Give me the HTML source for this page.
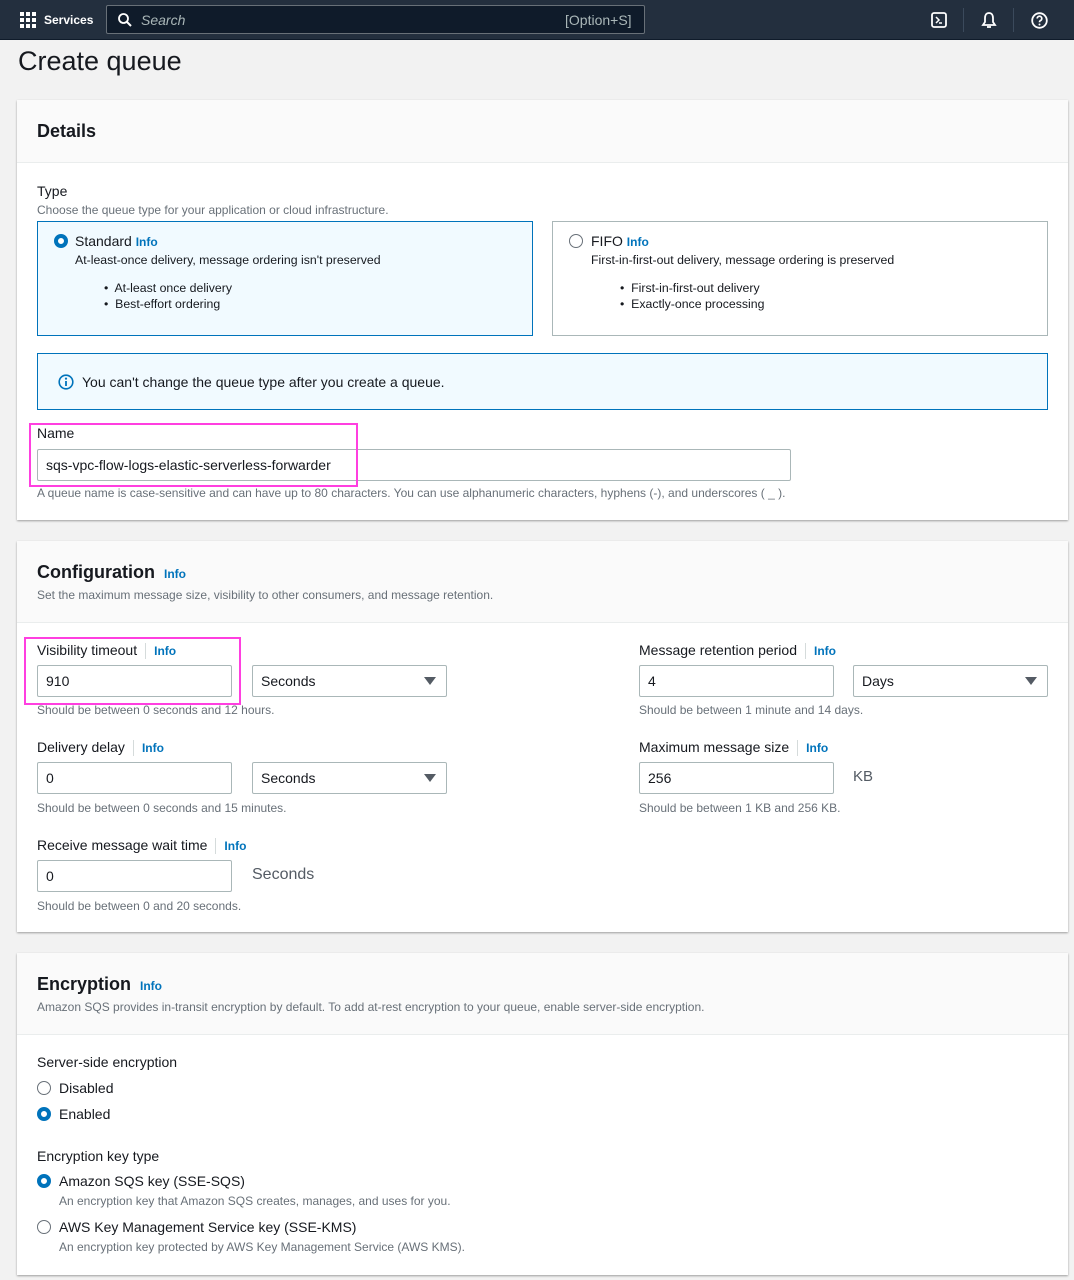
<!DOCTYPE html>
<html><head><meta charset="utf-8"><style>
*{box-sizing:border-box;margin:0;padding:0}
body{width:1074px;height:1280px;background:#f2f2f2;font-family:"Liberation Sans",sans-serif;color:#16191f;position:relative;overflow:hidden}
.a{position:absolute;white-space:nowrap}
.top{position:absolute;left:0;top:0;width:1074px;height:40px;background:#232f3e;border-bottom:1px solid #0f1b2a}
.panel{position:absolute;left:17px;width:1051px;background:#fff;box-shadow:0 1px 2px rgba(0,0,0,.35)}
.ph{position:absolute;left:0;top:0;width:100%;background:#fafafa;border-bottom:1px solid #eaeded}
.h2{font-size:18px;font-weight:bold}
.info{color:#0073bb;font-size:12px;font-weight:bold}
.lbl{font-size:14px}
.hint{font-size:12px;color:#687078}
.sm{font-size:12.3px}
.inp{position:absolute;height:32px;border:1px solid #aab7b8;background:#fff;font-size:14px;padding:7px 8px;border-radius:2px}
.sel:after{content:"";position:absolute;right:10px;top:11px;border-left:6px solid transparent;border-right:6px solid transparent;border-top:8px solid #545b64}
.r{position:absolute;width:14px;height:14px;border-radius:50%;border:1.5px solid #687078;background:#fff}
.r.on{border:4px solid #0073bb}
.pink{position:absolute;border:2px solid #ff3fe0}
.sep{display:inline-block;width:1px;height:16px;background:#d5dbdb;vertical-align:middle;margin:0 8px}
</style></head><body>
<div class="top">
 <svg class="a" style="left:20px;top:12px" width="16" height="16" viewBox="0 0 16 16" fill="#fff"><rect x="0" y="0" width="4" height="4"/><rect x="6" y="0" width="4" height="4"/><rect x="12" y="0" width="4" height="4"/><rect x="0" y="6" width="4" height="4"/><rect x="6" y="6" width="4" height="4"/><rect x="12" y="6" width="4" height="4"/><rect x="0" y="12" width="4" height="4"/><rect x="6" y="12" width="4" height="4"/><rect x="12" y="12" width="4" height="4"/></svg>
 <div class="a" style="left:44px;top:13px;color:#fff;font-size:12px;font-weight:bold">Services</div>
 <div class="a" style="left:106px;top:5px;width:539px;height:29px;background:#0f1b2a;border:1px solid #687078;border-radius:2px"></div>
 <svg class="a" style="left:118px;top:13px" width="14" height="14" viewBox="0 0 14 14"><circle cx="5.5" cy="5.5" r="4.5" stroke="#fff" stroke-width="1.8" fill="none"/><path d="M9 9l4 4" stroke="#fff" stroke-width="2"/></svg>
 <div class="a" style="left:141px;top:12px;color:#aab7b8;font-size:14px;font-style:italic">Search</div>
 <div class="a" style="left:565px;top:12px;color:#aab7b8;font-size:14px">[Option+S]</div>
 <svg class="a" style="left:931px;top:12px" width="16" height="16" viewBox="0 0 16 16"><rect x="1" y="1" width="14" height="14" rx="2" stroke="#fff" stroke-width="1.8" fill="none"/><path d="M5 5l3 3-3 3M8 11h3" stroke="#fff" stroke-width="1.5" fill="none"/></svg>
 <div class="a" style="left:963px;top:8px;width:1px;height:24px;background:#3b4a5c"></div>
 <svg class="a" style="left:981px;top:11px" width="16" height="18" viewBox="0 0 16 18"><path d="M8 2C5 2 4 4.5 4 7v4l-2 3h12l-2-3V7c0-2.5-1-5-4-5z" stroke="#fff" stroke-width="1.8" fill="none"/><path d="M6 16h4" stroke="#fff" stroke-width="1.8"/></svg>
 <div class="a" style="left:1013px;top:8px;width:1px;height:24px;background:#3b4a5c"></div>
 <svg class="a" style="left:1031px;top:12px" width="17" height="17" viewBox="0 0 17 17"><circle cx="8.5" cy="8.5" r="7.3" stroke="#fff" stroke-width="1.8" fill="none"/><path d="M6.2 6.5a2.3 2.3 0 1 1 3 2.2c-.6.3-.7.7-.7 1.5" stroke="#fff" stroke-width="1.7" fill="none"/><circle cx="8.5" cy="12.5" r="1" fill="#fff"/></svg>
</div>
<div class="a" style="left:18px;top:46px;font-size:27px">Create queue</div>

<div class="panel" style="top:100px;height:420px">
 <div class="ph" style="height:63px"></div>
 <div class="a h2" style="left:20px;top:21px">Details</div>
 <div class="a lbl" style="left:20px;top:83px">Type</div>
 <div class="a hint" style="left:20px;top:103px">Choose the queue type for your application or cloud infrastructure.</div>
 <div class="a" style="left:20px;top:121px;width:496px;height:115px;background:#f1faff;border:1px solid #0073bb"></div>
 <div class="r on" style="left:37px;top:134px"></div>
 <div class="a lbl" style="left:58px;top:133px">Standard <span class="info">Info</span></div>
 <div class="a sm" style="left:58px;top:153px">At-least-once delivery, message ordering isn't preserved</div>
 <div class="a sm" style="left:87px;top:181px">•&nbsp; At-least once delivery</div>
 <div class="a sm" style="left:87px;top:197px">•&nbsp; Best-effort ordering</div>
 <div class="a" style="left:535px;top:121px;width:496px;height:115px;border:1px solid #aab7b8"></div>
 <div class="r" style="left:552px;top:134px"></div>
 <div class="a lbl" style="left:574px;top:133px">FIFO <span class="info">Info</span></div>
 <div class="a sm" style="left:574px;top:153px">First-in-first-out delivery, message ordering is preserved</div>
 <div class="a sm" style="left:603px;top:181px">•&nbsp; First-in-first-out delivery</div>
 <div class="a sm" style="left:603px;top:197px">•&nbsp; Exactly-once processing</div>
 <div class="a" style="left:20px;top:253px;width:1011px;height:57px;background:#f1faff;border:1px solid #0073bb"></div>
 <svg class="a" style="left:41px;top:274px" width="16" height="16" viewBox="0 0 16 16"><circle cx="8" cy="8" r="6.8" stroke="#0073bb" stroke-width="1.6" fill="none"/><path d="M8 7v5" stroke="#0073bb" stroke-width="1.8"/><circle cx="8" cy="4.6" r="1.1" fill="#0073bb"/></svg>
 <div class="a lbl" style="left:65px;top:274px">You can't change the queue type after you create a queue.</div>
 <div class="a lbl" style="left:20px;top:325px">Name</div>
 <div class="inp" style="left:20px;top:349px;width:754px">sqs-vpc-flow-logs-elastic-serverless-forwarder</div>
 <div class="a hint" style="left:20px;top:386px">A queue name is case-sensitive and can have up to 80 characters. You can use alphanumeric characters, hyphens (-), and underscores ( _ ).</div>
 <div class="pink" style="left:12px;top:323px;width:329px;height:64px"></div>
</div>

<div class="panel" style="top:541px;height:391px">
 <div class="ph" style="height:82px"></div>
 <div class="a h2" style="left:20px;top:21px">Configuration <span class="info" style="margin-left:4px">Info</span></div>
 <div class="a hint" style="left:20px;top:47px">Set the maximum message size, visibility to other consumers, and message retention.</div>
 <div class="a lbl" style="left:20px;top:101px">Visibility timeout<span class="sep"></span><span class="info">Info</span></div>
 <div class="inp" style="left:20px;top:124px;width:195px">910</div>
 <div class="inp sel" style="left:235px;top:124px;width:195px">Seconds</div>
 <div class="a hint" style="left:20px;top:162px">Should be between 0 seconds and 12 hours.</div>
 <div class="pink" style="left:7px;top:96px;width:217px;height:68px"></div>
 <div class="a lbl" style="left:20px;top:198px">Delivery delay<span class="sep"></span><span class="info">Info</span></div>
 <div class="inp" style="left:20px;top:221px;width:195px">0</div>
 <div class="inp sel" style="left:235px;top:221px;width:195px">Seconds</div>
 <div class="a hint" style="left:20px;top:260px">Should be between 0 seconds and 15 minutes.</div>
 <div class="a lbl" style="left:20px;top:296px">Receive message wait time<span class="sep"></span><span class="info">Info</span></div>
 <div class="inp" style="left:20px;top:319px;width:195px">0</div>
 <div class="a" style="left:235px;top:325px;font-size:16px;color:#545b64">Seconds</div>
 <div class="a hint" style="left:20px;top:358px">Should be between 0 and 20 seconds.</div>
 <div class="a lbl" style="left:622px;top:101px">Message retention period<span class="sep"></span><span class="info">Info</span></div>
 <div class="inp" style="left:622px;top:124px;width:195px">4</div>
 <div class="inp sel" style="left:836px;top:124px;width:195px">Days</div>
 <div class="a hint" style="left:622px;top:162px">Should be between 1 minute and 14 days.</div>
 <div class="a lbl" style="left:622px;top:198px">Maximum message size<span class="sep"></span><span class="info">Info</span></div>
 <div class="inp" style="left:622px;top:221px;width:195px">256</div>
 <div class="a" style="left:836px;top:227px;font-size:15px;color:#545b64">KB</div>
 <div class="a hint" style="left:622px;top:260px">Should be between 1 KB and 256 KB.</div>
</div>

<div class="panel" style="top:953px;height:322px">
 <div class="ph" style="height:82px"></div>
 <div class="a h2" style="left:20px;top:21px">Encryption <span class="info" style="margin-left:4px">Info</span></div>
 <div class="a hint" style="left:20px;top:47px">Amazon SQS provides in-transit encryption by default. To add at-rest encryption to your queue, enable server-side encryption.</div>
 <div class="a lbl" style="left:20px;top:101px">Server-side encryption</div>
 <div class="r" style="left:20px;top:128px"></div>
 <div class="a lbl" style="left:42px;top:127px">Disabled</div>
 <div class="r on" style="left:20px;top:154px"></div>
 <div class="a lbl" style="left:42px;top:153px">Enabled</div>
 <div class="a lbl" style="left:20px;top:195px">Encryption key type</div>
 <div class="r on" style="left:20px;top:221px"></div>
 <div class="a lbl" style="left:42px;top:220px">Amazon SQS key (SSE-SQS)</div>
 <div class="a hint" style="left:42px;top:241px">An encryption key that Amazon SQS creates, manages, and uses for you.</div>
 <div class="r" style="left:20px;top:267px"></div>
 <div class="a lbl" style="left:42px;top:266px">AWS Key Management Service key (SSE-KMS)</div>
 <div class="a hint" style="left:42px;top:287px">An encryption key protected by AWS Key Management Service (AWS KMS).</div>
</div>
</body></html>
